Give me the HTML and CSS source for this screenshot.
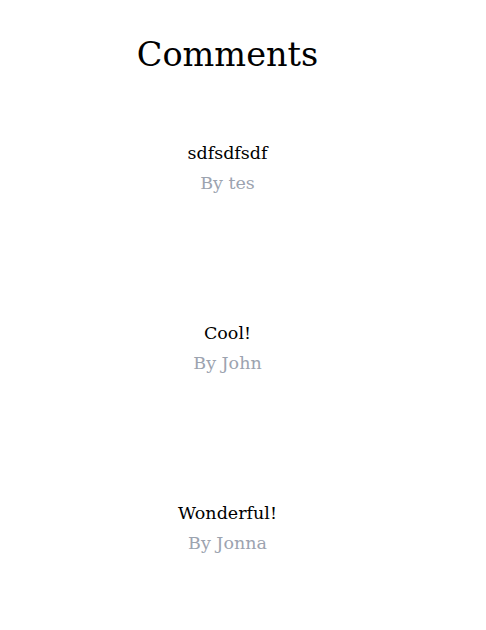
FILE: index.html
```html
<!DOCTYPE html>
<html lang="en">
<head>
<meta charset="utf-8">
<title>Comments</title>
<link rel="stylesheet" href="styles.css">
</head>
<body>
<main class="page">
  <h1 class="title">Comments</h1>
  <ul class="comments">
    <li class="comment">
      <p class="comment-text">sdfsdfsdf</p>
      <p class="comment-author">By tes</p>
    </li>
    <li class="comment">
      <p class="comment-text">Cool!</p>
      <p class="comment-author">By John</p>
    </li>
    <li class="comment">
      <p class="comment-text">Wonderful!</p>
      <p class="comment-author">By Jonna</p>
    </li>
  </ul>
</main>
</body>
</html>
```
FILE: styles.css
```css
html, body {
  margin: 0;
  padding: 0;
  background: #ffffff;
}
body {
  font-family: "DejaVu Serif", "Liberation Serif", serif;
  color: #000000;
}
.page {
  width: 455px;
  padding-top: 35px;
  display: flex;
  flex-direction: column;
  align-items: center;
}
.title {
  margin: 0;
  font-size: 33.5px;
  font-weight: normal;
  line-height: 40px;
}
.comments {
  list-style: none;
  margin: 63px 0 0 0;
  padding: 0;
  display: flex;
  flex-direction: column;
  align-items: center;
  gap: 120px;
}
.comment {
  display: flex;
  flex-direction: column;
  align-items: center;
}
.comment-text,
.comment-author {
  margin: 0;
  font-size: 17.5px;
  line-height: 30px;
}
.comment-author {
  color: #9ca3af;
}
```
